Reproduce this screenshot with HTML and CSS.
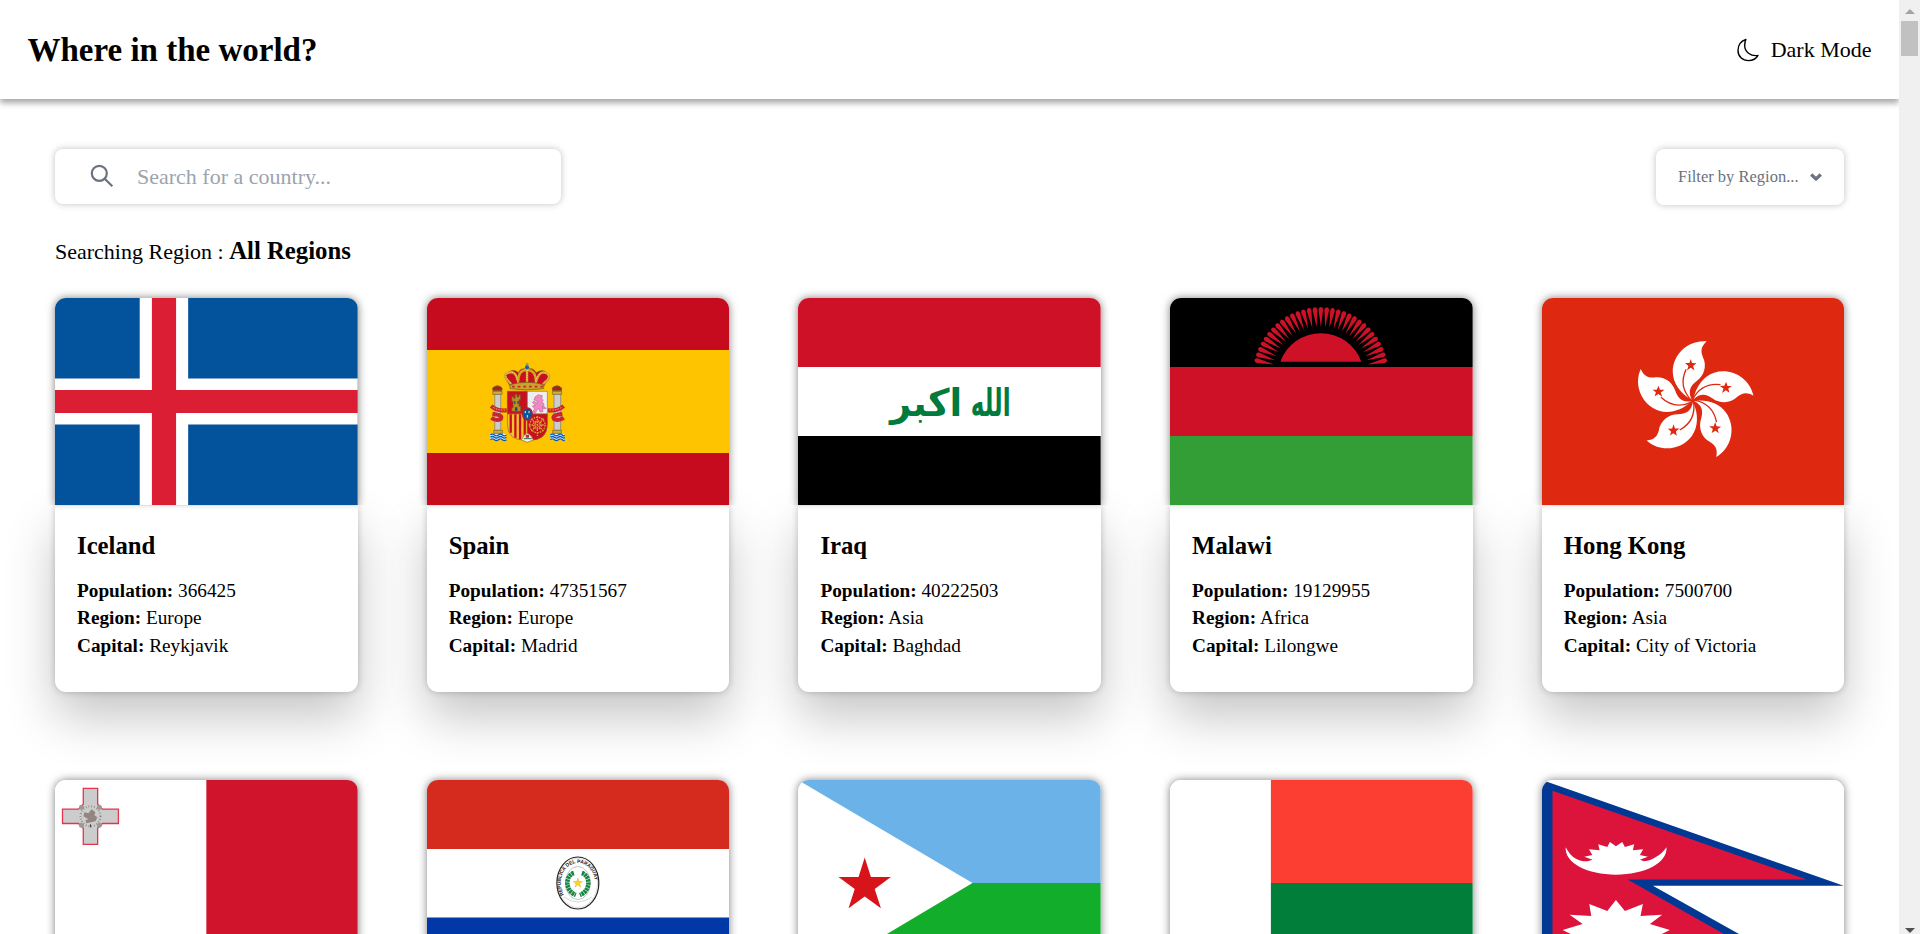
FILE: index.html
```html
<!DOCTYPE html>
<html lang="en">
<head>
<meta charset="utf-8">
<title>Where in the world?</title>
<link rel="stylesheet" href="styles.css">
</head>
<body>
<div class="page">
  <header class="header">
    <h1 class="brand">Where in the world?</h1>
    <button class="theme">
      <svg class="moon" viewBox="0 0 22 24"><path d="M8.9 1.4C3.8 3.2 1 7.600 1 12.500C1 18.500 5.500 22.600 11.400 22.600C15.800 22.600 19.300 20.600 21 17.400C13.400 18.600 7.700 13.600 7.700 7.400C7.700 5 8.100 3.100 8.900 1.400Z"/></svg>
      Dark Mode
    </button>
  </header>
  <main class="main">
    <div class="controls">
      <label class="search">
        <svg class="glass" viewBox="0 0 24 24"><ellipse cx="9.300" cy="9.300" rx="7.500" ry="7.500"/><path d="M14.700 14.700L22.300 22.300"/></svg>
        <input class="search-input" type="text" placeholder="Search for a country...">
      </label>
      <button class="filter">Filter by Region...
        <svg class="chevron" viewBox="0 0 12 8"><path d="M1.200 1.500L6 6L10.800 1.500"/></svg>
      </button>
    </div>
    <p class="region">Searching Region : <b class="region-name">All Regions</b></p>
    <section class="grid">
      <article class="card">
        <svg class="flag" viewBox="0 0 303 207" preserveAspectRatio="none"><path fill="#02529c" d="M0 0H303V207H0z"/><path fill="#fff" d="M84.800 0h48.500v207H84.800zM0 80.500h303v46H0z"/><path fill="#dc1e35" d="M97 0h24.200v207H97zM0 92h303v23H0z"/></svg>
        <div class="info"><h2 class="name">Iceland</h2><p><b>Population:</b> 366425</p><p><b>Region:</b> Europe</p><p><b>Capital:</b> Reykjavik</p></div>
      </article>
      <article class="card">
        <svg class="flag" viewBox="0 0 303 207" preserveAspectRatio="none">
          <path fill="#c60b1e" d="M0 0H303V207H0z"/><path fill="#ffc400" d="M0 52h303v103H0z"/>
          <g transform="translate(42.500 52) scale(.3333)">
            <g fill="#ccc" stroke="#777" stroke-width="2"><path d="M76 132h18v109H76zM254 132h20v109h-20z"/></g>
            <path fill="#c8b13a" stroke="#80602a" stroke-width="2" d="M70 124h28v9H70zM73 241h26v9H73zM249 124h28v9h-28zM250 241h26v9h-26z"/>
            <path fill="#b51b24" stroke="#79601c" stroke-width="3" d="M71 122q-5-9 4-12q9-5 18 0q8 4 4 12zM250 122q-5-9 4-12q9-5 18 0q8 4 4 12z"/>
            <path stroke="#e9f0f5" stroke-width="18" d="M62 261h48M243 261h42"/><path fill="none" stroke="#005bbf" stroke-width="4" d="M63 255q6-5 12 0t12 0t12 0t12 0M63 262q6-5 12 0t12 0t12 0t12 0M63 269q6-5 12 0t12 0t12 0t12 0M243 255q6-5 12 0t12 0t12 0t6 0M243 262q6-5 12 0t12 0t12 0t6 0M243 269q6-5 12 0t12 0t12 0t6 0"/>
            <path fill="none" stroke="#c8252f" stroke-width="12" d="M112 181Q83 184 65 168M69 192Q103 195 94 207Q80 215 66 203M235 181Q265 184 283 168M279 192Q245 195 254 207Q268 215 283 203"/>
            <path fill="none" stroke="#efc35a" stroke-width="3" stroke-dasharray="4 4" d="M107 180Q85 182 68 170M241 180Q263 182 280 170"/>
            <path fill="#c81020" stroke="#80622a" stroke-width="3" d="M114 124h60v68h-60z"/>
            <path fill="#eee" stroke="#777" stroke-width="2" d="M174 124h60v68h-60z"/>
            <path fill="#f7c32c" stroke="#8b6425" stroke-width="2" d="M114 192h60v78q-60 5-60-48z"/>
            <path stroke="#c81020" stroke-width="7" d="M124 193v55M138 193v70M152 193v75M166 193v75"/>
            <path fill="#c81020" stroke="#80622a" stroke-width="2" d="M174 192h60v30q0 53-60 48z"/>
            <g fill="none" stroke="#d7a82d" stroke-width="4" stroke-dasharray="5 3"><circle cx="204" cy="225" r="23"/><circle cx="204" cy="225" r="12"/><path d="M204 198v60M178 225h50M185 206l38 38M223 206l-38 38"/></g>
            <path fill="#b79024" stroke="#70551a" stroke-width="2" d="M127 184v-11h4v-19h-4v-14h6v5h4v-12h6v8h5v-6h5v14h-4v20h5v15z"/><path fill="#263f78" d="M137 172h7v10h-7zM134 154h4v7h-4zM144 154h4v7h-4z"/>
            <path fill="#f18ac3" stroke="#bb4e89" stroke-width="1.500" d="M188 187l8-10-7-9 9-2-9-9 5-4 10 8-2-9-8-2 3-9 9-7 13 3-2 9 5 4-5 6 6 4 1 10 7 5-8 2-4-8 2 16-9 1-3-10-7 5-4 9z"/>
            <path fill="#f9f0dc" stroke="#8b642a" stroke-width="2" d="M156 270q8-19 18-20q10 2 18 20l-18 7z"/><path fill="#c12b36" d="M169 254h10v9h-10z"/><path stroke="#187650" stroke-width="3" d="M163 266h24"/>
            <ellipse cx="174" cy="192" rx="14" ry="18" fill="#0055a7" stroke="#a52532" stroke-width="5"/><path stroke="#e6cc50" stroke-width="4" d="M168 183v7M179 183v7M174 195v8"/>
            <path fill="#c81020" stroke="#76551b" stroke-width="2" d="M124 111L112 92Q99 71 118 66Q133 56 147 68Q154 52 173 58Q191 51 200 68Q220 56 231 68Q247 77 233 94L221 111z"/>
            <path fill="none" stroke="#d5a622" stroke-width="7" d="M126 103Q92 72 119 68Q140 60 147 100M147 92Q147 60 172 60Q199 60 199 92M199 100Q208 60 230 69Q253 80 220 103M173 57v42"/>
            <path fill="none" stroke="#fff1c4" stroke-width="2.500" stroke-dasharray="3 4" d="M124 98Q97 73 119 68Q140 60 144 94M199 94Q208 60 230 69Q247 80 222 98M173 60v35"/>
            <path fill="#c8a42c" stroke="#765820" stroke-width="2" d="M122 104q51-14 101 0v12q-51 8-101 0z"/><path stroke="#d1222e" stroke-width="5" stroke-dasharray="8 9" d="M128 110h92"/>
            <path stroke="#ba9630" stroke-width="4" d="M173 38v12M168 42h10"/><circle cx="173" cy="52" r="6" fill="#0869ae"/>
          </g>
        </svg>
        <div class="info"><h2 class="name">Spain</h2><p><b>Population:</b> 47351567</p><p><b>Region:</b> Europe</p><p><b>Capital:</b> Madrid</p></div>
      </article>
      <article class="card">
        <svg class="flag" viewBox="0 0 303 207" preserveAspectRatio="none"><path fill="#ce1126" d="M0 0H303V69H0z"/><path fill="#fff" d="M0 69h303v69H0z"/><path d="M0 138h303v69H0z"/>
          <g class="script"><text transform="translate(92 118) scale(1.320 1.350)">اكبر</text><text transform="translate(173 118) scale(.820 1.350)">الله</text></g></svg>
        <div class="info"><h2 class="name">Iraq</h2><p><b>Population:</b> 40222503</p><p><b>Region:</b> Asia</p><p><b>Capital:</b> Baghdad</p></div>
      </article>
      <article class="card">
        <svg class="flag" viewBox="0 0 303 207" preserveAspectRatio="none"><path d="M0 0H303V69H0z"/><path fill="#ce1126" d="M0 69h303v69H0zM110.500 63.700A43 43 0 0 1 191.500 63.700z"/><path fill="#339e35" d="M0 138h303v69H0z"/><g id="rays" fill="#ce1126"></g></svg>
        <div class="info"><h2 class="name">Malawi</h2><p><b>Population:</b> 19129955</p><p><b>Region:</b> Africa</p><p><b>Capital:</b> Lilongwe</p></div>
      </article>
      <article class="card">
        <svg class="flag" viewBox="0 0 303 207" preserveAspectRatio="none"><path fill="#de2910" d="M0 0H303V207H0z"/>
          <defs><g id="petal"><path fill="#fff" d="M-3-3C-38-22-60-54-60-87C-60-140-12-184 42-178C24-162 24-148 30-132C44-105 34-75 12-59C-6-45-16-30-3-3z"/><path fill="none" stroke="#de2910" stroke-width="4" d="M-20-94C-36-60-30-28-4-1"/><path fill="#de2910" d="M-6-125l4 12 13 1-10 8 4 13-11-8-11 8 4-13-10-9 13 0z"/></g></defs>
          <g transform="translate(150.900 102.700) scale(.3333)"><use href="#petal"/><use href="#petal" transform="rotate(72)"/><use href="#petal" transform="rotate(144)"/><use href="#petal" transform="rotate(216)"/><use href="#petal" transform="rotate(288)"/></g></svg>
        <div class="info"><h2 class="name">Hong Kong</h2><p><b>Population:</b> 7500700</p><p><b>Region:</b> Asia</p><p><b>Capital:</b> City of Victoria</p></div>
      </article>
      <article class="card">
        <svg class="flag" viewBox="0 0 303 207" preserveAspectRatio="none"><path fill="#fff" d="M0 0H303V207H0z"/><path fill="#cf142b" d="M151.500 0H303V207H151.500z"/>
          <g transform="translate(35.500 36.300)"><circle r="13.500" fill="#bbb" stroke="#cf142b"/><path fill="#ccc" stroke="#e0354d" stroke-width="1.300" d="M-7.200-28H7.200V-12L12-7.200H28V7.200H12L7.200 12V28H-7.200V12L-12 7.200H-28V-7.200H-12L-7.200-12z"/><circle r="10" fill="none" stroke="#8b8585" stroke-width="2" stroke-dasharray=".8 2"/><circle cx="-9" cy="-9" r="2.500" fill="#9d9891"/><circle cx="9" cy="-9" r="2.500" fill="#9d9891"/><circle cx="-9" cy="9" r="2.500" fill="#9d9891"/><circle cx="9" cy="9" r="2.500" fill="#9d9891"/><path fill="#93867f" d="M-6-4l4 1 3-4 4 3-1 3 3 2-2 4-9 2-1-3 3-1-5-3z"/><path stroke="#333" d="M0 8v3"/></g></svg>
        <div class="info"></div>
      </article>
      <article class="card">
        <svg class="flag" viewBox="0 0 303 207" preserveAspectRatio="none"><path fill="#d52b1e" d="M0 0H303V69H0z"/><path fill="#fff" d="M0 69h303v69H0z"/><path fill="#0038a8" d="M0 137.500h303V207H0z"/>
          <g transform="translate(151 103)" fill="none"><ellipse rx="21" ry="26" stroke="#222" stroke-width="1.200"/><ellipse rx="19.700" ry="24.500" stroke="#bbb" stroke-width=".5"/><ellipse rx="12.500" ry="16.500" stroke="#888" stroke-width=".5"/><path id="seal" d="M-14 12C-23-8-10-20 0-20S23-8 14 12"/><text class="seal-text"><textPath href="#seal" textLength="68">REPUBLICA DEL PARAGUAY</textPath></text><path stroke="#168442" stroke-width="4.500" stroke-dasharray="2.500 .5" d="M-4-10C-13-7-13 8-2 12M4-10C13-7 13 8 2 12"/><path fill="#f9d52a" stroke="#d5aa2a" stroke-width=".4" d="M0-5l1.200 3.500h3.500l-2.800 2.200 1 3.500L0 2l-2.900 2.200 1-3.500-2.800-2.200h3.500z"/><path stroke="#bbb" stroke-width=".6" d="M-14 14Q0 24 14 14"/></g></svg>
        <div class="info"></div>
      </article>
      <article class="card">
        <svg class="flag" viewBox="0 0 303 207" preserveAspectRatio="none"><path fill="#6ab2e7" d="M0 0H303V103H0z"/><path fill="#12ad2b" d="M0 103h303v104H0z"/><path fill="#fff" d="M0 0L174.700 103L0 207z"/><path fill="#d7141a" d="M66.800 77.500l6.200 19.500h20L76.800 109l6.200 19.300-16.200-11.900-16.200 11.900L56.800 109 40.600 97h20z"/></svg>
        <div class="info"></div>
      </article>
      <article class="card">
        <svg class="flag" viewBox="0 0 303 207" preserveAspectRatio="none"><path fill="#fff" d="M0 0H303V207H0z"/><path fill="#fc3d32" d="M101 0H303V103H101z"/><path fill="#007e3a" d="M101 103h202v104H101z"/></svg>
        <div class="info"></div>
      </article>
      <article class="card">
        <svg class="flag" viewBox="0 0 303 207" preserveAspectRatio="none"><path fill="#fff" d="M0 0H303V207H0z"/><path fill="#003893" d="M0 0L302 105.800H111L292 207H0z"/><path fill="#dc143c" d="M10.500 10.700L265 99.600H85.700L262 199H10.500z"/>
          <g transform="translate(-12 -10) scale(.3333)" fill="#fff"><path d="M107 232C126 268 150 275 173 274L188 269 163 260 187 255 177 238 209 241 205 223 232 231 240 216 258 229 277 216 285 231 313 223 309 241 340 238 330 255 354 260 330 269 343 274C370 271 394 254 410 232C413 280 343 314 258 314S104 280 107 232z"/><path d="M258 390L285 423 339 402 332 438 397 434 360 462 420 480 380 500 420 540 258 620 98 540 138 500 98 480 158 462 119 434 184 438 178 402 232 423z"/></g></svg>
        <div class="info"></div>
      </article>
    </section>
  </main>
</div>
<aside class="scrollbar"><i class="arrow arrow-up"></i><i class="thumb"></i><i class="arrow arrow-down"></i></aside>
<script src="rays.js"></script>
</body>
</html>
```
FILE: styles.css
```css
* { box-sizing: border-box; margin: 0; padding: 0; }
html { font-size: 22px; }
body { display: flex; height: 934px; overflow: hidden; background: #fff; color: #000; font-family: "Liberation Serif", "Times New Roman", serif; }
button { border: 0; background: none; font-family: inherit; color: inherit; }
.page { flex: 1; min-width: 0; height: 934px; overflow: hidden; }
.header { display: flex; align-items: center; justify-content: space-between; height: 99px; padding: 0 27.500px; background: #fff; box-shadow: 0 4px 6px rgba(0,0,0,.35); }
.brand { padding-top: 1px; font-size: 1.500rem; line-height: 2rem; }
.theme { display: flex; align-items: center; gap: 12px; font-size: 1rem; line-height: 1.500rem; }
.moon { width: 22px; height: 24px; fill: none; stroke: #000; stroke-width: 1.400; stroke-linejoin: round; }
.main { padding: 49.500px 55px 0; }
.controls { display: flex; justify-content: space-between; align-items: flex-start; height: 56px; }
.search { display: flex; align-items: center; width: 506px; height: 55px; padding-left: 35px; gap: 23px; border-radius: 8px; background: #fff; box-shadow: 0 0 7px rgba(0,0,0,.25); }
.glass { width: 24px; height: 24px; fill: none; stroke: #6b7280; stroke-width: 2.200; }
.search-input { flex: 1; min-width: 0; border: 0; outline: 0; background: none; font: 1rem/1.500rem "Liberation Serif", serif; }
.search-input::placeholder { color: #9ca3af; opacity: 1; }
.filter { display: flex; align-items: center; justify-content: space-between; width: 188px; height: 56px; padding: 0 22px; border-radius: 8px; background: #fff; color: #6b7280; font-size: .75rem; box-shadow: 0 0 7px rgba(0,0,0,.25); }
.chevron { width: 12px; height: 8px; fill: none; stroke: #6b7280; stroke-width: 3.200; }
.region { height: 38.500px; margin: 27.700px 0 27.500px; font-size: 1rem; line-height: 38.500px; }
.region-name { font-size: 1.125rem; }
.grid { display: grid; grid-template-columns: repeat(5, 302.700px); gap: 88px 69px; }
.card { height: 394px; }
.flag { position: relative; z-index: 1; display: block; width: 100%; height: 207px; border-radius: 11px 11px 0 0; box-shadow: 0 0 9px rgba(0,0,0,.5); clip-path: inset(-12px -12px 0); }
.info { height: 187px; padding: 22.300px 22px 0; border-radius: 0 0 11px 11px; background: linear-gradient(rgba(0,0,0,.07), transparent 5px) #fff; box-shadow: 0 25px 50px rgba(0,0,0,.23), 0 0 7px rgba(0,0,0,.22); font-size: .875rem; line-height: 1.250rem; }
.name { margin-bottom: 11px; font-size: 1.125rem; line-height: 1.750rem; }
.script { fill: #007a3d; font: bold 28px "DejaVu Sans", sans-serif; }
.seal-text { fill: #222; font: bold 5px "Liberation Sans", sans-serif; }
.scrollbar { display: flex; flex-direction: column; align-items: center; width: 21px; height: 934px; padding: 9px 0 1px; background: #f0f0f0; }
.arrow { width: 0; height: 0; border: 5px solid transparent; }
.arrow-up { border-top: 0; border-bottom-color: #a3a3a3; }
.thumb { width: 17px; height: 35px; margin-top: 7px; background: #c1c1c1; }
.arrow-down { margin-top: auto; border-bottom: 0; border-top-color: #505050; }
```
FILE: rays.js
```javascript
const rays = document.getElementById("rays");
for (let i = -15; i <= 15; i++) {
  const ray = document.createElementNS("http://www.w3.org/2000/svg", "path");
  ray.setAttribute("d", "M0-48L-2.300-65C-2.300-69 2.300-69 2.300-65z");
  ray.setAttribute("transform", `translate(151 77) rotate(${i * 5.15})`);
  rays.append(ray);
}
```
